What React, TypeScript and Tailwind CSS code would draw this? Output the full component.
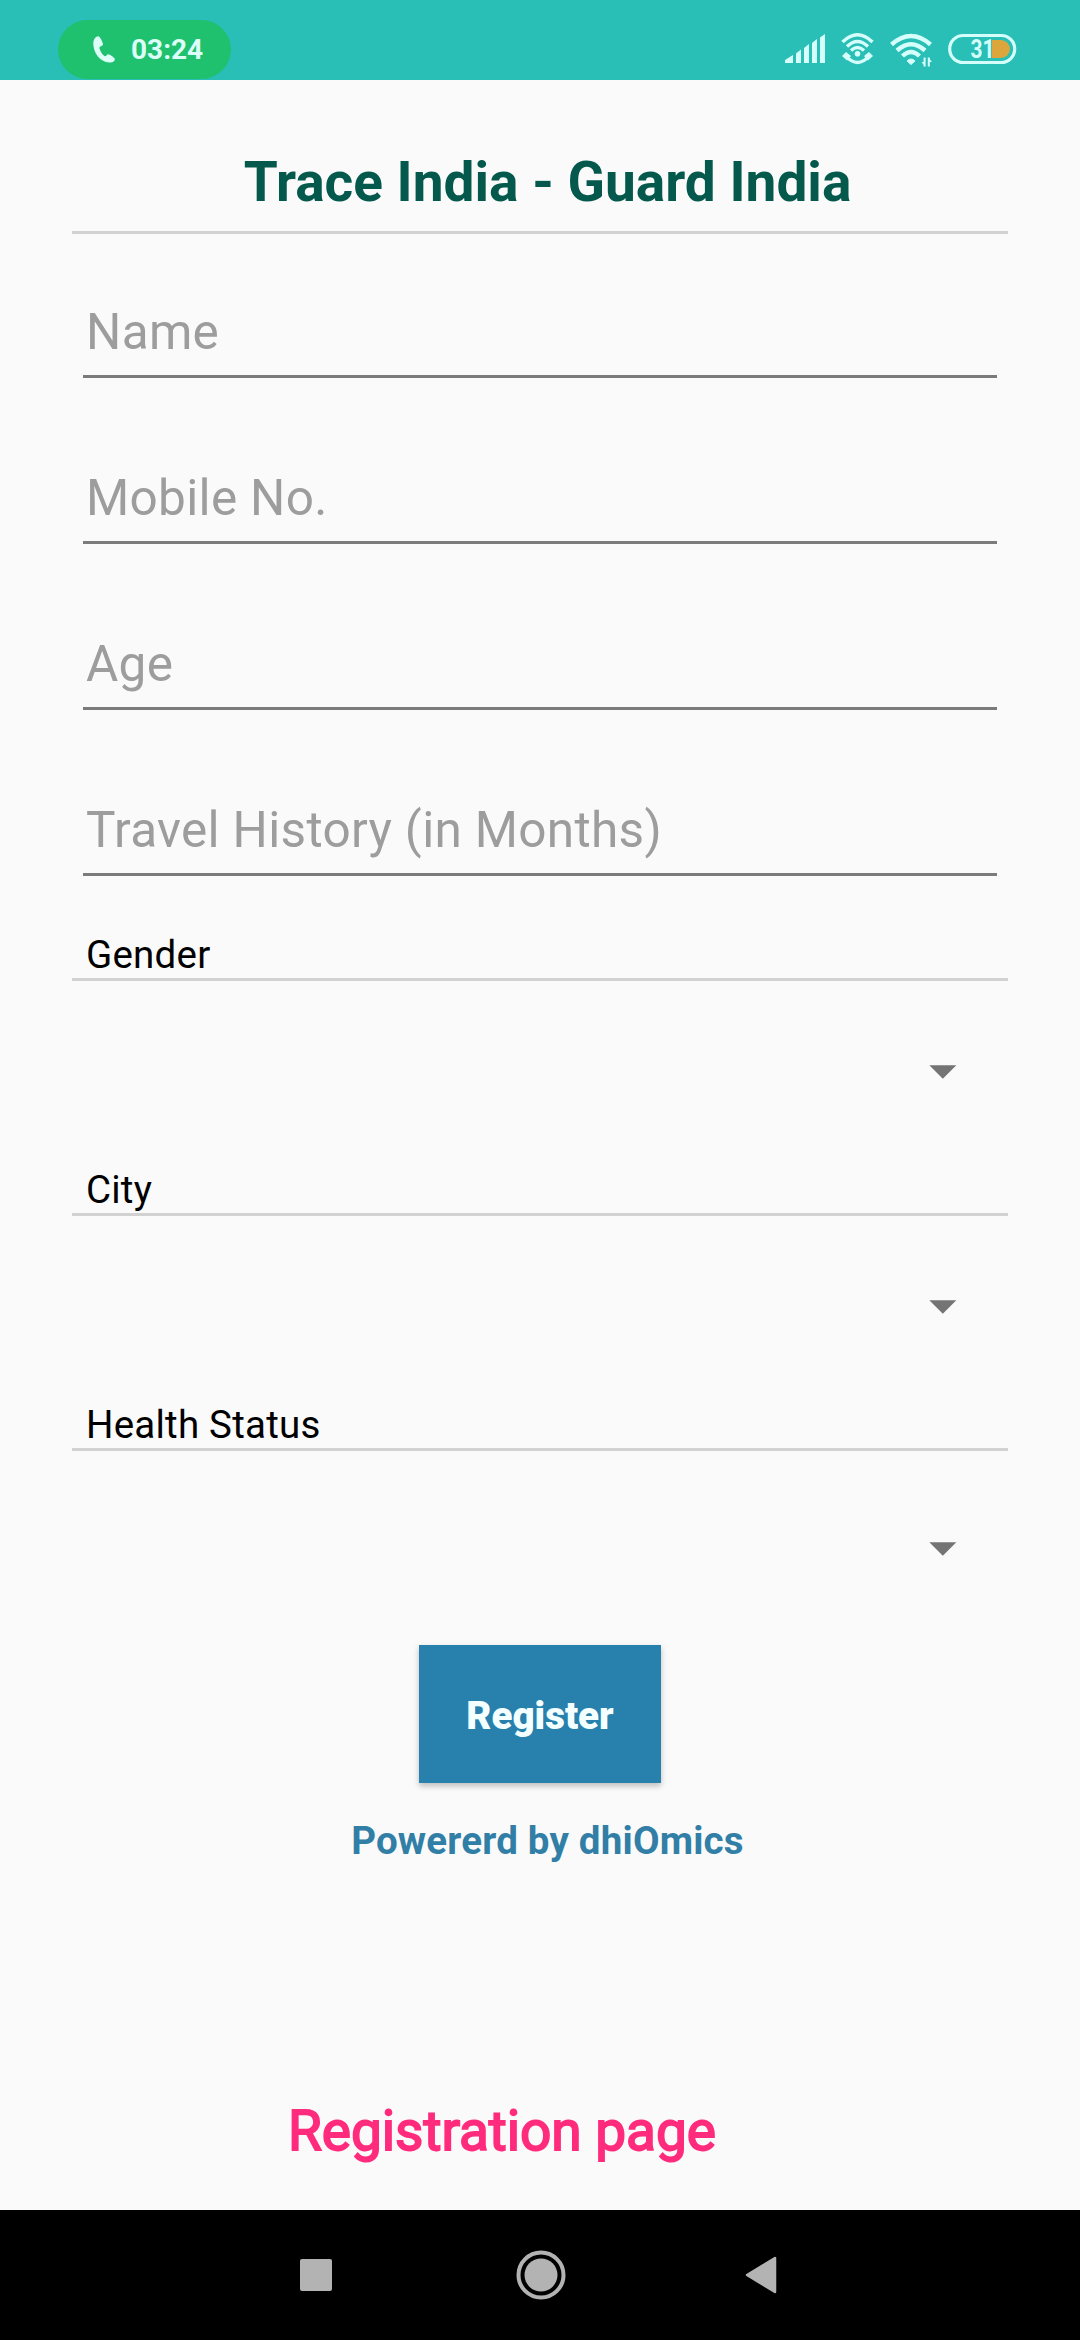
function StatusBar() {
  return (
    <header className="flex h-20 shrink-0 items-start justify-between bg-[#29beb6] pl-[58px] pr-[63px] pt-5 text-[#dcfff8]">
      <div className="flex h-[59px] w-[173px] items-center rounded-full bg-[#1fc16f] pl-[34px]">
        <svg width="24" height="29" viewBox="0 0 24 29" fill="currentColor">
          <path d="M6.5 1.2 C3.8 1 1.5 4 1.3 8 C1 17.5 8 27 17.2 27.6 C20.8 27.8 23 26 22.8 23.8 C22.6 22.6 17.5 19 16 19.2 C14.8 19.5 13.8 21.6 12.8 21.3 C10.4 20 7.8 15.6 7.4 12.6 C7.4 11.4 10.8 10.8 11 9.4 C11 7.6 8.2 1.6 6.5 1.2Z" />
        </svg>
        <span className="ml-[15px] text-[28px] font-bold leading-[58px]">03:24</span>
      </div>
      <svg width="232" height="40" viewBox="785 30 232 40" className="mt-[10px]" fill="none">
        <g fill="#d5fffb">
          <path d="M785 63 V60 L793 55 V63Z" />
          <path d="M796 63 V53.5 L801 49.5 V63Z" />
          <path d="M804 63 V48 L809 44 V63Z" />
          <path d="M812 63 V43 L817 39 V63Z" />
          <path d="M820 63 V37.5 L825 34 V63Z" />
        </g>
        <g stroke="#d5fffb" strokeWidth="3.4">
          <path d="M842.5 42 Q857.5 27.5 872.5 42" />
          <path d="M847 46.5 Q857.5 36.5 868 46.5" />
          <path d="M851 50.5 Q857.5 44.5 864 50.5" />
          <path d="M845 55 Q857.5 70 870 55" />
        </g>
        <g fill="#d5fffb">
          <circle cx="857.5" cy="53.8" r="2.8" />
          <path d="M842 56 L846 52 L851 56 L847 60.5Z" />
          <path d="M873 56 L869 52 L864 56 L868 60.5Z" />
        </g>
        <g stroke="#d5fffb" strokeWidth="4.4">
          <path d="M891.5 44.5 Q911 27.5 930.5 44.5" />
          <path d="M897 50.5 Q911 38 925 50.5" />
          <path d="M902.5 56 Q911 48 919.5 56" />
        </g>
        <path d="M907 61 Q911 57 915 61 L911 64.5Z" fill="#d5fffb" stroke="#d5fffb" strokeWidth="1" strokeLinejoin="round" />
        <path d="M924.6 57.5 V66.5 M928.8 66.5 V57.5" stroke="#d5fffb" strokeWidth="2" />
        <path d="M921.5 62 H925 V66.5Z M932 62 H928.4 V57.5Z" fill="#d5fffb" />
        <rect x="949.7" y="35.5" width="65" height="27" rx="13.5" stroke="#d5fffb" strokeWidth="3.2" />
        <path d="M992 40 H1001 A9 9 0 0 1 1001 58 H992Z" fill="#dca63c" />
        <text x="970.6" y="58" fontSize="25" fontWeight="700" fill="#d5fffb" textLength="24" lengthAdjust="spacingAndGlyphs">31</text>
      </svg>
    </header>
  );
}

function Divider() {
  return <div className="h-[3px] shrink-0 bg-[#d2d2d2]" />;
}

function Field({ label }: { label: string }) {
  return (
    <div className="mx-[11px] flex h-[166px] shrink-0 flex-col justify-end border-b-[3px] border-[#7b7b7b] pb-[10px] pl-[3px]">
      <span className="text-[49.5px] leading-[66px] tracking-[0.32px] text-[#9d9d9d]">{label}</span>
    </div>
  );
}

function SelectLabel({ children }: { children: string }) {
  return <span className="h-12 pl-[14px] text-[38.5px] leading-[50px] tracking-[0.22px] text-black">{children}</span>;
}

function Caret() {
  return (
    <svg width="28" height="14" viewBox="0 0 28 14" className="mr-[51.5px]" fill="#747474">
      <path d="M0.3 0.3 H27.3 L13.8 13.8Z" />
    </svg>
  );
}

export default function App() {
  return (
    <div className="flex h-[2340px] w-[1080px] flex-col overflow-hidden bg-[#fafafa] font-['Roboto',sans-serif]">
      <StatusBar />
      <main className="flex flex-1 flex-col px-[72px]">
        <h1 className="h-[151px] pl-[15px] pt-[66px] text-center text-[55px] font-bold leading-[72px] text-[#04594c]">
          Trace India - Guard India
        </h1>
        <Divider />
        <div className="-mt-[22px] flex flex-col">
          <Field label="Name" />
          <Field label="Mobile No." />
          <Field label="Age" />
          <Field label="Travel History (in Months)" />
        </div>
        <div className="h-[54px] shrink-0" />
        <SelectLabel>Gender</SelectLabel>
        <Divider />
        <div className="flex h-[184px] justify-end pt-[84px]"><Caret /></div>
        <SelectLabel>City</SelectLabel>
        <Divider />
        <div className="flex h-[184px] justify-end pt-[84px]"><Caret /></div>
        <SelectLabel>Health Status</SelectLabel>
        <Divider />
        <div className="flex h-[194px] justify-end pt-[91px]"><Caret /></div>
        <button className="h-[138px] w-[242px] self-center bg-[#2880ad] pt-[3px] text-[38.5px] font-black leading-[50px] text-[#f4ffff] shadow-[0_3px_6px_rgba(0,0,0,0.25)]">
          Register
        </button>
        <p className="mt-[33px] pl-[15px] text-center text-[38.5px] font-bold leading-[50px] tracking-[0.2px] text-[#317fa6]">Powererd by dhiOmics</p>
        <p className="mt-[229px] pl-[216px] text-[55px] leading-[72px] tracking-[-0.05px] text-[#ff2b7c] [-webkit-text-stroke:1.8px_#ff2b7c]">Registration page</p>
      </main>
      <nav className="flex h-[130px] shrink-0 items-center bg-black pl-[300px]">
        <div className="h-8 w-8 rounded-[2px] bg-[#b3b3b3]" />
        <svg width="50" height="50" viewBox="0 0 50 50" className="ml-[183.5px]">
          <circle cx="25" cy="25" r="22.5" fill="none" stroke="#b3b3b3" strokeWidth="4" />
          <circle cx="25" cy="25" r="16.5" fill="#b3b3b3" />
        </svg>
        <svg width="32" height="38" viewBox="0 0 32 38" className="ml-[179.5px]">
          <path d="M2 19 L30 2 V36Z" fill="#b3b3b3" stroke="#b3b3b3" strokeWidth="2.5" strokeLinejoin="round" />
        </svg>
      </nav>
    </div>
  );
}
